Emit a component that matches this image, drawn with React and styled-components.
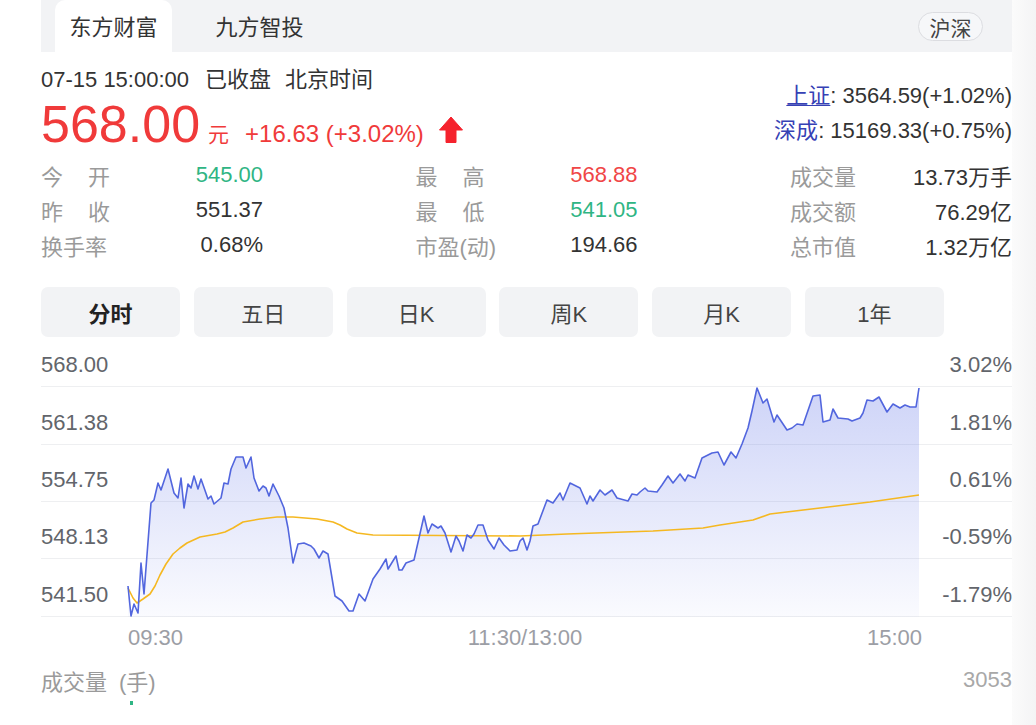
import React from 'react';
import styled, { createGlobalStyle } from 'styled-components';

const GlobalStyle = createGlobalStyle`
  html, body { margin: 0; padding: 0; background: #fff; }
  body {
    font-family: "Liberation Sans", "Noto Sans CJK SC", Arial, sans-serif;
    color: #333;
    overflow: hidden;
  }
`;

const Page = styled.div`
  display: flex;
  width: 1036px;
  height: 725px;
  overflow: hidden;
`;

const Main = styled.div`
  width: 971px;
  margin-left: 41px;
  display: flex;
  flex-direction: column;
  flex-shrink: 0;
`;

const SideShade = styled.div`
  flex: 1;
  background: linear-gradient(to right, #fbfbfb, #f4f4f5);
`;

const TabBar = styled.div`
  height: 52px;
  background: #f2f3f5;
  display: flex;
  align-items: stretch;
  padding-left: 14px;
  gap: 29px;
`;

const Tab = styled.div`
  width: 117px;
  display: flex;
  align-items: center;
  justify-content: center;
  padding-bottom: 2px;
  font-size: 22px;
  color: #333;
  background: ${p => (p.$active ? '#fff' : 'transparent')};
  border-radius: 10px 10px 0 0;
`;

const MarketPill = styled.div`
  margin-left: auto;
  margin-right: 29px;
  margin-top: 12px;
  align-self: flex-start;
  box-sizing: border-box;
  width: 65px;
  height: 29px;
  border: 1px solid #dcdde1;
  border-radius: 15px;
  background: #f6f7f9;
  display: flex;
  align-items: center;
  justify-content: center;
  font-size: 21px;
  color: #444;
`;

const Info = styled.div`
  display: flex;
  justify-content: space-between;
  padding-top: 13px;
`;

const QuoteCol = styled.div`
  display: flex;
  flex-direction: column;
`;

const DateLine = styled.div`
  font-size: 22px;
  line-height: 30px;
  color: #333;
  display: flex;
`;

const DatePart = styled.span`
  margin-left: ${p => p.$gap || 0}px;
`;

const PriceRow = styled.div`
  display: flex;
  align-items: baseline;
  height: 58px;
  color: #f03a3a;
`;

const Price = styled.span`
  font-size: 52px;
  line-height: 58px;
`;

const Unit = styled.span`
  font-size: 21px;
  margin-left: 8px;
`;

const Change = styled.span`
  font-size: 24px;
  margin-left: 16px;
`;

const UpArrow = styled.svg`
  align-self: flex-end;
  margin-left: 15px;
  margin-bottom: 9px;
`;

const IndexCol = styled.div`
  padding-top: 13px;
  display: flex;
  flex-direction: column;
  align-items: flex-end;
`;

const IndexLine = styled.div`
  font-size: 22px;
  line-height: 35px;
  color: #333;
`;

const IndexName = styled.span`
  color: #3641b5;
  text-decoration: ${p => (p.$underline ? 'underline' : 'none')};
  text-decoration-thickness: 1px;
  text-underline-offset: 2px;
`;

const Stats = styled.div`
  display: grid;
  grid-template-columns: repeat(3, 222px);
  justify-content: space-between;
  margin-top: 4px;
`;

const Cell = styled.div`
  display: flex;
  justify-content: space-between;
  align-items: center;
  height: 35px;
  font-size: 22px;
`;

const Label = styled.span`
  display: flex;
  justify-content: space-between;
  min-width: 69px;
  color: #9a9a9a;
`;

const Value = styled.span`
  color: ${p => p.$color || '#333'};
`;

const Periods = styled.div`
  display: grid;
  grid-template-columns: repeat(6, 139px);
  column-gap: 13.8px;
  margin-top: 25px;
`;

const PeriodBtn = styled.div`
  height: 50px;
  border-radius: 7px;
  background: #f2f3f5;
  display: flex;
  align-items: center;
  justify-content: center;
  font-size: 22px;
  color: ${p => (p.$active ? '#222' : '#444')};
  font-weight: ${p => (p.$active ? 700 : 400)};
`;

const Chart = styled.div`
  position: relative;
  margin-top: 14px;
`;

const GridRow = styled.div`
  height: ${p => p.$h}px;
  box-sizing: border-box;
  border-bottom: 1px solid #eeeff1;
  display: flex;
  justify-content: space-between;
  align-items: flex-end;
  padding-bottom: 9px;
  font-size: 22px;
  line-height: 24px;
  color: #62656b;
`;

const Plot = styled.svg`
  position: absolute;
  left: 0;
  top: 36px;
  overflow: visible;
  pointer-events: none;
`;

const TimeAxis = styled.div`
  display: flex;
  justify-content: space-between;
  width: 794px;
  margin-left: 87px;
  height: 42px;
  align-items: center;
  font-size: 22px;
  color: #9c9ea5;
`;

const VolHead = styled.div`
  display: flex;
  justify-content: space-between;
  align-items: center;
  margin-top: 1px;
  height: 40px;
  font-size: 22px;
  color: #9a9a9a;
`;

const VolUnit = styled.span`
  margin-left: 12px;
`;

const VolMax = styled.span`
  color: #a8a8a8;
`;

const VolStrip = styled.div`
  height: 4px;
  display: flex;
  align-items: flex-start;
  padding-left: 89px;
  margin-top: 1px;
`;

const VolTick = styled.div`
  width: 3px;
  height: 4px;
  background: #2fb584;
`;

const blue = [
  128,585,131,615,134,603,138,612,141,562,144,593,151,502,154,499,158,482,161,489,168,468,174,492,178,497,181,477,184,507,188,483,191,487,194,475,198,488,201,478,208,498,211,495,214,503,221,497,224,482,228,483,231,468,236,456,243,456,246,467,251,456,254,477,259,490,263,485,266,487,269,495,273,483,279,495,284,507,288,527,293,562,298,543,304,542,311,545,314,548,319,557,323,550,328,553,335,595,342,600,349,610,353,610,359,593,365,600,373,578,380,568,386,558,388,568,396,555,399,569,402,569,406,562,414,559,424,515,428,532,432,523,438,527,441,525,445,532,451,551,456,535,459,540,463,550,467,534,471,537,474,533,478,524,483,524,488,539,494,548,499,537,504,544,510,550,517,549,520,540,523,537,527,549,530,540,533,525,538,523,547,499,553,502,560,492,563,499,570,482,580,487,587,503,590,495,593,500,600,489,605,494,612,489,617,497,628,500,632,493,637,494,640,491,645,487,648,490,657,491,662,484,668,475,673,482,680,473,685,480,688,474,695,477,702,457,712,452,718,451,724,464,731,451,736,457,742,443,748,427,752,410,757,387,763,402,767,398,774,421,777,414,783,423,787,429,792,427,797,423,803,424,813,395,820,394,823,421,830,419,833,408,838,417,848,418,852,420,860,417,863,412,867,399,873,400,879,396,887,411,893,403,900,407,905,404,910,406,916,406,919,387
];

const yellow = [
  128,587,133,597,137,602,143,598,150,593,155,585,160,574,166,563,173,553,180,547,187,542,200,536,217,533,225,531,233,527,243,521,260,518,277,516,293,516,317,518,333,521,340,524,347,528,357,532,373,534,520,535,567,533,653,530,703,527,720,524,753,519,770,513,820,507,870,501,919,494
];

const OX = 41;
const OY = 386;

const toPath = arr => {
  let d = '';
  for (let i = 0; i < arr.length; i += 2) {
    d += `${i === 0 ? 'M' : 'L'}${arr[i] - OX},${arr[i + 1] - OY} `;
  }
  return d.trim();
};

const bluePath = toPath(blue);
const yellowPath = toPath(yellow);
const fillPath = `${bluePath} L${919 - OX},230 L${128 - OX},230 Z`;

const stats = [
  ['今 开', '545.00', '#2fb584'],
  ['最 高', '568.88', '#f04646'],
  ['成交量', '13.73万手'],
  ['昨 收', '551.37'],
  ['最 低', '541.05', '#2fb584'],
  ['成交额', '76.29亿'],
  ['换手率', '0.68%'],
  ['市盈(动)', '194.66'],
  ['总市值', '1.32万亿'],
];

const periods = ['分时', '五日', '日K', '周K', '月K', '1年'];

const axis = [
  ['568.00', '3.02%', 36],
  ['561.38', '1.81%', 58],
  ['554.75', '0.61%', 57],
  ['548.13', '-0.59%', 57],
  ['541.50', '-1.79%', 58],
];

export default function App() {
  return (
    <>
      <GlobalStyle />
      <Page>
        <Main>
          <TabBar>
            <Tab $active>东方财富</Tab>
            <Tab>九方智投</Tab>
            <MarketPill>沪深</MarketPill>
          </TabBar>

          <Info>
            <QuoteCol>
              <DateLine>
                <DatePart>07-15 15:00:00</DatePart>
                <DatePart $gap={16}>已收盘</DatePart>
                <DatePart $gap={14}>北京时间</DatePart>
              </DateLine>
              <PriceRow>
                <Price>568.00</Price>
                <Unit>元</Unit>
                <Change>+16.63 (+3.02%)</Change>
                <UpArrow width="24" height="28" viewBox="0 0 24 28">
                  <path
                    d="M12 1 L23.5 14 L17 14 L17 26.5 L7 26.5 L7 14 L0.5 14 Z"
                    fill="#f5222d"
                    stroke="#f5222d"
                    strokeWidth="1"
                    strokeLinejoin="round"
                  />
                </UpArrow>
              </PriceRow>
            </QuoteCol>
            <IndexCol>
              <IndexLine>
                <IndexName $underline>上证</IndexName>: 3564.59(+1.02%)
              </IndexLine>
              <IndexLine>
                <IndexName>深成</IndexName>: 15169.33(+0.75%)
              </IndexLine>
            </IndexCol>
          </Info>

          <Stats>
            {stats.map(([label, value, color]) => (
              <Cell key={label}>
                <Label>
                  {label.includes(' ')
                    ? label.split(' ').map(c => <span key={c}>{c}</span>)
                    : label}
                </Label>
                <Value $color={color}>{value}</Value>
              </Cell>
            ))}
          </Stats>

          <Periods>
            {periods.map((p, i) => (
              <PeriodBtn key={p} $active={i === 0}>
                {p}
              </PeriodBtn>
            ))}
          </Periods>

          <Chart>
            {axis.map(([l, r, h]) => (
              <GridRow key={l} $h={h}>
                <span>{l}</span>
                <span>{r}</span>
              </GridRow>
            ))}
            <Plot width="971" height="230" viewBox="0 0 971 230">
              <defs>
                <linearGradient id="areaFill" x1="0" y1="0" x2="0" y2="230" gradientUnits="userSpaceOnUse">
                  <stop offset="0" stopColor="#5b6fe6" stopOpacity="0.3" />
                  <stop offset="1" stopColor="#5b6fe6" stopOpacity="0.03" />
                </linearGradient>
              </defs>
              <path d={fillPath} fill="url(#areaFill)" />
              <path d={yellowPath} fill="none" stroke="#f5b821" strokeWidth="1.6" strokeLinejoin="round" />
              <path d={bluePath} fill="none" stroke="#5266de" strokeWidth="1.6" strokeLinejoin="round" />
            </Plot>
          </Chart>

          <TimeAxis>
            <span>09:30</span>
            <span>11:30/13:00</span>
            <span>15:00</span>
          </TimeAxis>

          <VolHead>
            <span>
              成交量<VolUnit>(手)</VolUnit>
            </span>
            <VolMax>3053</VolMax>
          </VolHead>
          <VolStrip>
            <VolTick />
          </VolStrip>
        </Main>
        <SideShade />
      </Page>
    </>
  );
}
